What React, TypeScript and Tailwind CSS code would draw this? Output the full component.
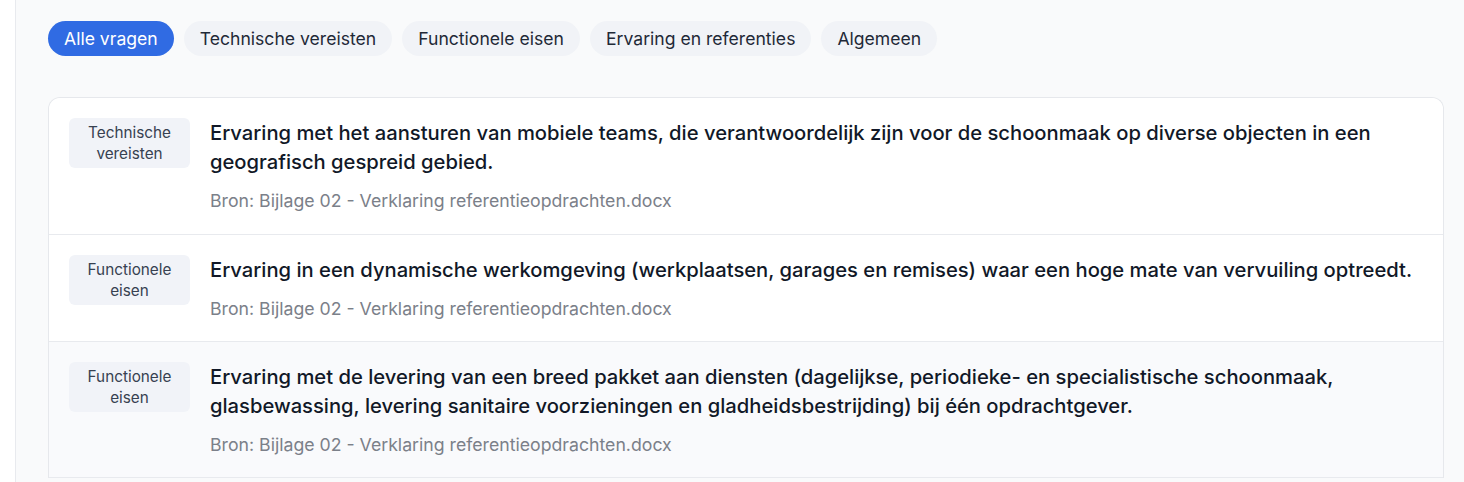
import React from "react";

const tabs = [
  "Alle vragen",
  "Technische vereisten",
  "Functionele eisen",
  "Ervaring en referenties",
  "Algemeen",
];

const rows = [
  {
    badge: ["Technische", "vereisten"],
    title:
      "Ervaring met het aansturen van mobiele teams, die verantwoordelijk zijn voor de schoonmaak op diverse objecten in een geografisch gespreid gebied.",
    hover: false,
  },
  {
    badge: ["Functionele", "eisen"],
    title:
      "Ervaring in een dynamische werkomgeving (werkplaatsen, garages en remises) waar een hoge mate van vervuiling optreedt.",
    hover: false,
  },
  {
    badge: ["Functionele", "eisen"],
    title:
      "Ervaring met de levering van een breed pakket aan diensten (dagelijkse, periodieke- en specialistische schoonmaak, glasbewassing, levering sanitaire voorzieningen en gladheidsbestrijding) bij één opdrachtgever.",
    hover: true,
  },
];

export default function App() {
  return (
    <div
      className="flex h-[482px] w-full overflow-hidden bg-[#f9fafb]"
      style={{ fontFamily: "Inter, 'Noto Sans', sans-serif" }}
    >
      <div className="w-4 shrink-0 border-r border-[#e8eaee] bg-white" />
      <div className="flex min-w-0 flex-1 flex-col pl-8 pr-5 pt-[21px]">
        <div className="flex items-center gap-[10px]">
          {tabs.map((t, i) => (
            <div
              key={t}
              className={
                i === 0
                  ? "rounded-full bg-[#306be3] px-4 py-1.5 text-[17.6px] leading-[23px] text-white"
                  : "rounded-full bg-[#f1f3f7] px-4 py-1.5 text-[17.6px] leading-[23px] text-[#1f2937]"
              }
            >
              {t}
            </div>
          ))}
        </div>
        <div className="mt-[41px] rounded-t-xl border border-b-0 border-[#e6e8ec] bg-white">
          {rows.map((r, i) => (
            <div
              key={i}
              className={
                (r.hover ? "bg-[#f9fafc] " : "bg-white ") +
                (i === 0 ? "rounded-t-xl pb-[21px] " : "pb-5 ") +
                "flex items-start gap-5 border-b border-[#e8eaee] px-5 pt-5"
              }
            >
              <div className="w-[121px] shrink-0 rounded-md bg-[#f1f3f8] py-1 text-center text-[15.3px] leading-[21px] text-[#374151]">
                <div>{r.badge[0]}</div>
                <div>{r.badge[1]}</div>
              </div>
              <div className="min-w-0 flex-1">
                <div className="text-[20.2px] font-medium leading-[29px] text-[#111827]">
                  {r.title}
                </div>
                <div className="mt-[13px] text-[17.7px] leading-6 text-[#7b8089]">
                  Bron: Bijlage 02 - Verklaring referentieopdrachten.docx
                </div>
              </div>
            </div>
          ))}
        </div>
      </div>
    </div>
  );
}
